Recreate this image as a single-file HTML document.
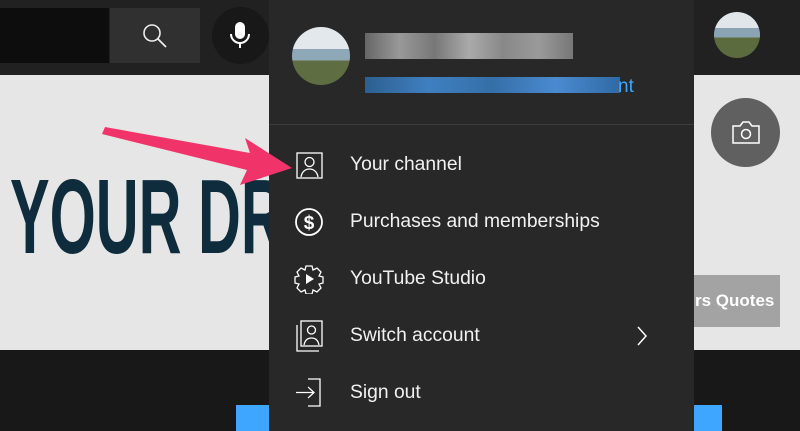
<!DOCTYPE html>
<html><head><style>
body{margin:0;width:800px;height:431px;overflow:hidden;position:relative;background:#181818;font-family:"Liberation Sans",sans-serif}
div{position:absolute}
.it{left:350px;color:#f1f1f1;font-size:19.3px}
svg{position:absolute}
</style></head><body>
<div style="left:0;top:0;width:800px;height:75px;background:#212121"></div>
<div style="left:0;top:75px;width:800px;height:275px;background:#e6e6e6"></div>
<div style="left:0;top:8px;width:109px;height:55px;background:#0d0d0d"></div>
<div style="left:110px;top:8px;width:90px;height:55px;background:#303030"></div>
<svg style="left:140px;top:22px" width="30" height="30" viewBox="0 0 30 30"><circle cx="12" cy="11" r="8" fill="none" stroke="#eee" stroke-width="1.6"/><line x1="18" y1="17" x2="26" y2="25" stroke="#eee" stroke-width="1.8"/></svg>
<div style="left:212px;top:7px;width:57px;height:57px;border-radius:50%;background:#181818"></div>
<svg style="left:228px;top:20px" width="24" height="30" viewBox="0 0 24 30"><rect x="7" y="2" width="10" height="17" rx="5" fill="#fff"/><path d="M3 14a9 9 0 0 0 18 0M12 23v5" fill="none" stroke="#fff" stroke-width="2"/></svg>
<div style="left:10px;top:164px;font-weight:bold;font-size:106px;color:#0f2c3d;transform:scaleX(0.56);transform-origin:0 0;line-height:106px;white-space:nowrap">YOUR DREAM</div>
<div style="left:555px;top:275px;width:225px;height:52px;background:#a3a3a3"></div>
<div style="left:695px;top:291px;color:#fff;font-weight:bold;font-size:17px">rs Quotes</div>
<div style="left:711px;top:98px;width:69px;height:69px;border-radius:50%;background:#606060"></div>
<svg style="left:731px;top:120px" width="30" height="26" viewBox="0 0 30 26"><path d="M2 6h7l3-4h6l3 4h7v17H2z" fill="none" stroke="#fff" stroke-width="1.5"/><circle cx="15" cy="14" r="4.5" fill="none" stroke="#fff" stroke-width="1.5"/></svg>
<div style="left:714px;top:12px;width:46px;height:46px;border-radius:50%;background:linear-gradient(#e0e6ea 0 35%,#8aa4b4 35% 55%,#5c6b3e 55%)"></div>
<div style="left:236px;top:405px;width:252px;height:26px;background:#3ea6ff"></div>
<div style="left:510px;top:405px;width:212px;height:26px;background:#3ea6ff"></div>
<div style="left:269px;top:0;width:425px;height:431px;background:#282828"></div>
<div style="left:269px;top:124px;width:425px;height:1px;background:#3d3d3d"></div>
<div style="left:292px;top:27px;width:58px;height:58px;border-radius:50%;background:linear-gradient(#e3e8ec 0 38%,#8ea8b8 38% 58%,#5f6e42 58%)"></div>
<div style="left:365px;top:33px;width:208px;height:26px;background:linear-gradient(90deg,#666,#999,#777,#aaa,#888,#9a9a9a,#777)"></div>
<div style="left:365px;top:77px;width:255px;height:16px;background:linear-gradient(90deg,#2d5f8f,#3f7fc0,#356fa8,#4a8ad0,#2f6aa5)"></div>
<div style="left:618px;top:76px;color:#3ea6ff;font-size:19px">nt</div>
<svg style="left:296px;top:150px" width="28" height="30" viewBox="0 0 28 30"><rect x="1" y="3" width="25" height="25" fill="none" stroke="#fff" stroke-width="1.3"/><circle cx="13.5" cy="12" r="4.5" fill="none" stroke="#fff" stroke-width="1.3"/><path d="M5 27c1-6 5-8 8.5-8s7.5 2 8.5 8" fill="none" stroke="#fff" stroke-width="1.3"/></svg>
<div class="it" style="top:154px">Your channel</div>
<svg style="left:294px;top:207px" width="30" height="30" viewBox="0 0 30 30"><circle cx="15" cy="15" r="13" fill="none" stroke="#fff" stroke-width="1.8"/><text x="15" y="22" text-anchor="middle" fill="#fff" font-size="19" font-weight="bold" font-family="Liberation Sans">$</text></svg>
<div class="it" style="top:211px">Purchases and memberships</div>
<svg style="left:294px;top:264px" width="30" height="30" viewBox="0 0 30 30"><path d="M12 2h6l1 4 4-2 4 4-2 4 4 1v6l-4 1 2 4-4 4-4-2-1 4h-6l-1-4-4 2-4-4 2-4-4-1v-6l4-1-2-4 4-4 4 2z" fill="none" stroke="#fff" stroke-width="1.3"/><path d="M12 10v10l8-5z" fill="#fff"/></svg>
<div class="it" style="top:268px">YouTube Studio</div>
<svg style="left:295px;top:320px" width="30" height="32" viewBox="0 0 30 32"><path d="M2 5v26h22" fill="none" stroke="#fff" stroke-width="1.3"/><rect x="6" y="1" width="21" height="25" fill="none" stroke="#fff" stroke-width="1.3"/><circle cx="16.5" cy="10" r="4" fill="none" stroke="#fff" stroke-width="1.3"/><path d="M9 25c1-5 4-7 7.5-7s6.5 2 7.5 7" fill="none" stroke="#fff" stroke-width="1.3"/></svg>
<div class="it" style="top:325px">Switch account</div>
<svg style="left:634px;top:324px" width="16" height="24" viewBox="0 0 16 24"><path d="M4 3l8 9-8 9" fill="none" stroke="#fff" stroke-width="1.5"/></svg>
<svg style="left:294px;top:378px" width="30" height="30" viewBox="0 0 30 30"><path d="M14 1h12v27H14" fill="none" stroke="#fff" stroke-width="1.3"/><path d="M2 14.5h18M14 9l6 5.5-6 5.5" fill="none" stroke="#fff" stroke-width="1.3"/></svg>
<div class="it" style="top:382px">Sign out</div>
<svg style="left:100px;top:118px" width="200" height="80" viewBox="0 0 200 80"><path d="M5 9L150 35L145 20L192 50L140 67L147 52L2 16z" fill="#f0346a"/></svg>
</body></html>
